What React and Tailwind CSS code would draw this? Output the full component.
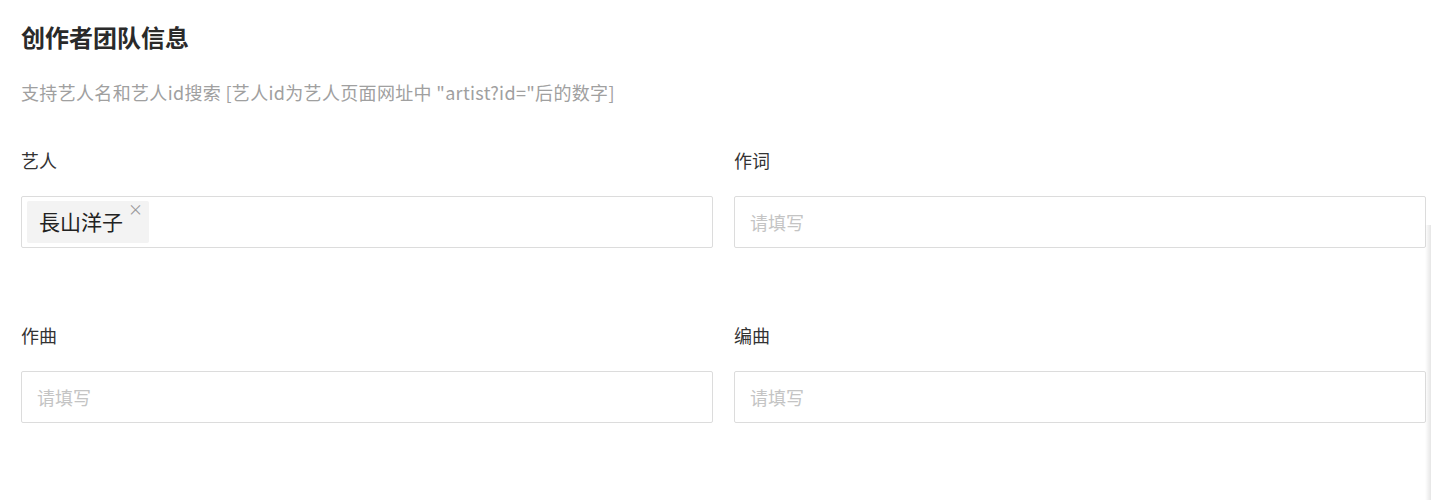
const font = { fontFamily: '"Microsoft YaHei", "Noto Sans CJK SC", "Noto Sans", sans-serif' };

function Field({ label, children }) {
  return (
    <div>
      <div className="h-6 text-[18px] leading-6 text-[#333]">{label}</div>
      <div className="mt-6 h-[52px] rounded-[2px] border border-[#dcdcdc] bg-white">{children}</div>
    </div>
  );
}

function Placeholder() {
  return <div className="flex h-full items-center px-[15px] text-[18px] text-[#c4c4c4]">请填写</div>;
}

export default function App() {
  return (
    <div className="relative min-h-[500px] overflow-hidden bg-white" style={font}>
      <div className="ml-[21px] w-[1405px] pt-[21px]">
        <h2 className="text-[24px] font-bold leading-8 text-[#2a2a2a]">创作者团队信息</h2>
        <p className="mt-[27px] text-[18px] leading-6 tracking-[0.33px] text-[#a0a0a0]">
          支持艺人名和艺人id搜索 [艺人id为艺人页面网址中 "artist?id="后的数字]
        </p>
        <div className="mt-[44px] grid grid-cols-2 gap-x-[21px] gap-y-[75px]">
          <Field label="艺人">
            <div className="flex h-full items-center px-[5px]">
              <div className="relative flex h-[42px] w-[122px] items-center rounded-[2px] bg-[#f3f3f3] pl-3 text-[21px] text-[#222]">
                長山洋子
                <span className="absolute right-[6px] top-0 text-[15px] leading-4 text-[#999]">×</span>
              </div>
            </div>
          </Field>
          <Field label="作词">
            <Placeholder />
          </Field>
          <Field label="作曲">
            <Placeholder />
          </Field>
          <Field label="编曲">
            <Placeholder />
          </Field>
        </div>
      </div>
      <div className="pointer-events-none absolute bottom-0 right-0 top-[225px] w-[6px] bg-gradient-to-l from-black/10 to-transparent" />
    </div>
  );
}
